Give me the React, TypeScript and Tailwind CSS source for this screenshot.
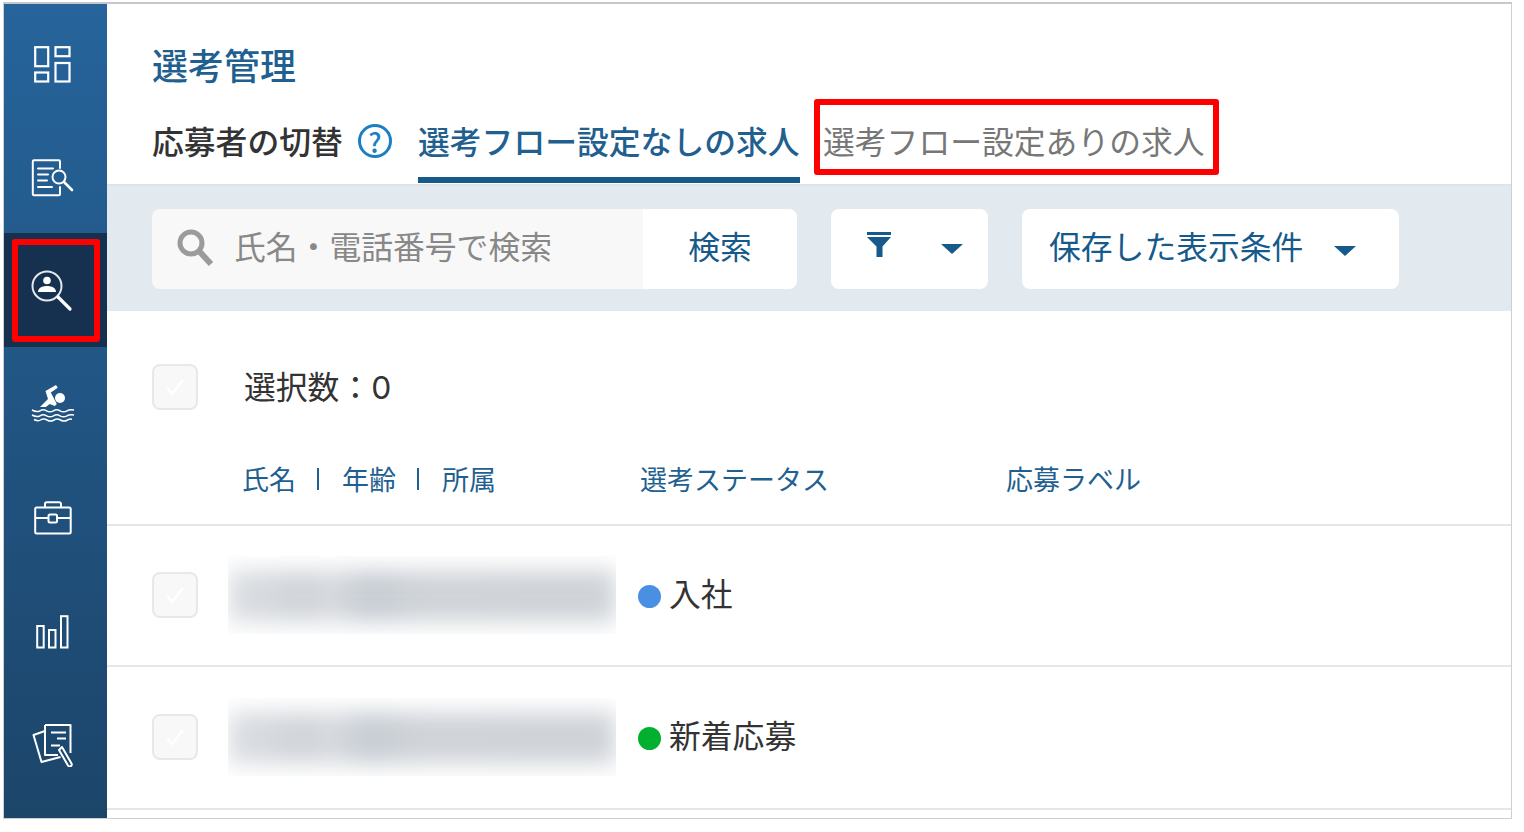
import React from "react";

const font = { fontFamily: '"Noto Sans CJK JP", "Noto Sans", sans-serif' };

const DashboardIcon = () => (
  <svg width="38" height="38" viewBox="0 0 38 38" fill="none" stroke="white" strokeWidth="2.2">
    <rect x="1.2" y="1.2" width="13" height="19" />
    <rect x="21.5" y="1.2" width="14" height="9" />
    <rect x="1.2" y="26.5" width="13" height="9" />
    <rect x="21.5" y="17" width="14" height="18.5" />
  </svg>
);

const ReportSearchIcon = () => (
  <svg width="44" height="38" viewBox="0 0 44 38" fill="none" stroke="white" strokeWidth="2" strokeLinecap="round">
    <path d="M29 9V2.5a1.2 1.2 0 0 0-1.2-1.2H3A1.2 1.2 0 0 0 1.800 2.500V35a1.200 1.200 0 0 0 1.200 1.200h24.800A1.200 1.200 0 0 0 29 35V28" />
    <path d="M7 9.500h15M7 15.500h10M7 21.500h9M7 28h14" />
    <circle cx="28" cy="18" r="6.500" />
    <path d="M33 23l8 8" strokeWidth="2.600" />
  </svg>
);

const PersonSearchIcon = () => (
  <svg width="42" height="42" viewBox="0 0 42 42" fill="none">
    <circle cx="16" cy="16" r="14.500" stroke="#e4e8ec" strokeWidth="2" />
    <circle cx="16" cy="10.500" r="3.800" fill="white" />
    <path d="M7 22c0-4 4-6 9-6s9 2 9 6z" fill="white" />
    <path d="M27 27l12 12" stroke="white" strokeWidth="3.200" strokeLinecap="round" />
  </svg>
);

const SwimIcon = () => (
  <svg width="44" height="38" viewBox="0 0 44 38" fill="none">
    <circle cx="29" cy="14" r="5" fill="white" />
    <path d="M9 23l8-8-2.500-8L25 1l1.800 2.800-7 4.700 6 11.500-2 2-5-2-4 3z" fill="white" />
    <path
      d="M1 26c3.500 2 6 2 8 .8s4.500-1.200 6.500 0 5 1.200 7 0 4.500-1.200 6.500 0 5 1.200 7 0 4-1.200 7-.8M1 31c3.500 2 6 2 8 .8s4.500-1.200 6.500 0 5 1.200 7 0 4.500-1.200 6.500 0 5 1.200 7 0 4-1.200 7-.8M3 35.500c3 1.500 5 1.500 6.500.5s4.500-1.200 6.500 0 5 1.200 7 0 4.500-1.200 6.500 0 5 1.200 7 0 2.500-1 4.500-.8"
      stroke="white"
      strokeWidth="1.500"
    />
  </svg>
);

const BriefcaseIcon = () => (
  <svg width="38" height="34" viewBox="0 0 38 34" fill="none" stroke="white" strokeWidth="2" strokeLinejoin="round">
    <rect x="1.200" y="6.500" width="35.500" height="26" rx="1.500" />
    <path d="M11 6.500V3a1.800 1.800 0 0 1 1.800-1.800h12.400A1.800 1.800 0 0 1 27 3v3.500" />
    <path d="M1.200 17h13M23.800 17h13" />
    <rect x="14.500" y="13.500" width="8.500" height="8" rx="1.500" />
  </svg>
);

const BarsIcon = () => (
  <svg width="34" height="34" viewBox="0 0 34 34" fill="none" stroke="white" strokeWidth="2">
    <rect x="1.200" y="11" width="6.500" height="21.500" />
    <rect x="13" y="15" width="6.500" height="17.500" />
    <rect x="25" y="1.200" width="6.500" height="31.300" />
  </svg>
);

const DocumentsIcon = () => (
  <svg width="42" height="44" viewBox="0 0 42 44" fill="none" stroke="white" strokeWidth="2" strokeLinejoin="round">
    <path d="M13 2h25.500v28" />
    <path d="M13 2v30h13" />
    <path d="M13 8L1.500 12l8 27 19-5" />
    <path d="M19 9.500h15M25 15.500h9M19 22.500h9" />
    <path d="M30 24l9.500 16.500a2 2 0 0 1-3.500 2L27 27z" />
  </svg>
);

const FilterIcon = () => (
  <svg width="24" height="26" viewBox="0 0 24 26" fill="#155a8a">
    <rect x="0" y="0" width="24" height="3" />
    <path d="M0 5h24l-8.500 9.500V25H9.500V14.500z" />
  </svg>
);

const Caret = () => <span className="block w-0 h-0 border-x-[11px] border-x-transparent border-t-[10px] border-t-[#155a8a]" />;

const navItems = [
  { Icon: DashboardIcon, offset: "pt-[6px]" },
  { Icon: ReportSearchIcon, offset: "pt-[4px]" },
  { Icon: PersonSearchIcon, offset: "" },
  { Icon: SwimIcon, offset: "pb-[2px]" },
  { Icon: BriefcaseIcon, offset: "" },
  { Icon: BarsIcon, offset: "" },
  { Icon: DocumentsIcon, offset: "pb-[3px]" },
];

const Sidebar = () => (
  <div className="w-[103px] shrink-0 pt-[1px] bg-gradient-to-b from-[#26649b] to-[#1c456a]">
    {navItems.map(({ Icon, offset }, i) =>
      i === 2 ? (
        <div key={i} className="h-[114px] bg-[#15314f] flex items-center justify-center">
          <div className="w-[88px] h-[103px] border-[6px] border-[#ff0000] rounded-[3px] flex items-center justify-center pr-[8px] pt-[2px]">
            <Icon />
          </div>
        </div>
      ) : (
        <div key={i} className={`h-[114px] flex items-center justify-center pr-[6px] ${offset}`}>
          <Icon />
        </div>
      )
    )}
  </div>
);

const Checkbox = () => (
  <div className="w-[46px] h-[46px] shrink-0 rounded-lg border-2 border-[#e8e8e8] bg-[#f8f8f8] flex items-center justify-center">
    <svg width="24" height="24" viewBox="0 0 24 24" fill="none" stroke="white" strokeWidth="2.500">
      <path d="M4 13l5 6L20 5" />
    </svg>
  </div>
);

const BlurredName = () => (
  <div className="w-[388px] h-[78px] overflow-hidden shrink-0 pt-[14px] pb-[12px]">
    <div className="h-[52px] blur-[11px] bg-[linear-gradient(90deg,#dcdfe3_0%,#d0d4d9_20%,#d8dbdf_27%,#c6ccd3_36%,#d0d4d9_50%,#cfd3d8_100%)]" />
  </div>
);

const Row = ({ dot, label, height }: { dot: string; label: string; height: string }) => (
  <div className={`${height} flex items-center pl-[45px] pb-[2px] border-b-2 border-[#e6e6e6]`}>
    <Checkbox />
    <div className="ml-[30px]">
      <BlurredName />
    </div>
    <span className={`ml-[22px] mt-[4px] w-[23px] h-[23px] rounded-full ${dot}`} />
    <span className="ml-[8px] pb-[5px] text-[31.8px] leading-[44px] text-[#333]">{label}</span>
  </div>
);

export default function App() {
  return (
    <div className="w-[1524px] h-[832px] bg-white pt-[2px] pl-[3px]" style={font}>
      <div className="w-[1509px] h-[817px] border border-[#cfcfcf] border-t-2 border-t-[#c8c8c8] flex overflow-hidden">
        <Sidebar />
        <div className="flex-1 min-w-0">
          {/* Title and tabs */}
          <div className="h-[180px] pl-[45px]">
            <div className="pt-[35px] text-[36px] leading-[50px] font-medium text-[#1f6090]">選考管理</div>
            <div className="mt-[10px] flex items-start">
              <div className="mt-[19px] text-[31.8px] leading-[44px] font-medium text-[#333] w-[190px] whitespace-nowrap">応募者の切替</div>
              <div className="mt-[25px] ml-[16px] w-[34px] h-[34px] rounded-full border-[3px] border-[#1b7fc4] text-[#1b7fc4] flex items-center justify-center text-[27px] leading-none font-medium">?</div>
              <div className="ml-[26px] w-[382px] h-[84px] pt-[19px] border-b-[6px] border-[#155a88] text-[31.8px] leading-[44px] font-medium text-[#1f6090] whitespace-nowrap">
                選考フロー設定なしの求人
              </div>
              <div className="ml-[14px] w-[405px] h-[76px] border-[6px] border-[#ff0000] rounded-[3px] pl-[3px] pt-[13px] text-[31.8px] leading-[44px] text-[#777] whitespace-nowrap">
                選考フロー設定ありの求人
              </div>
            </div>
          </div>

          {/* Search band */}
          <div className="h-[127px] bg-[#e2eaf0] border-t-2 border-[#e0e3e6] pl-[45px] pt-[23px] flex items-start">
            <div className="w-[645px] h-[80px] rounded-lg overflow-hidden flex">
              <div className="w-[491px] bg-[#f8f8f8] flex items-center pl-[25px]">
                <svg width="37" height="38" viewBox="0 0 37 38" fill="none" stroke="#9b9b9b" className="mb-[2px]">
                  <circle cx="14" cy="14" r="11" strokeWidth="5" />
                  <path d="M22 22l12 13" strokeWidth="6" />
                </svg>
                <span className="ml-[20px] pb-[8px] text-[31.8px] leading-[44px] text-[#888] whitespace-nowrap">氏名・電話番号で検索</span>
              </div>
              <div className="flex-1 bg-white flex items-center justify-center pb-[8px] text-[31.8px] leading-[44px] text-[#155a8a]">検索</div>
            </div>
            <div className="ml-[34px] w-[157px] h-[80px] rounded-lg bg-white flex items-center pl-[36px]">
              <span className="mb-[9px] flex">
                <FilterIcon />
              </span>
              <span className="ml-[50px]">
                <Caret />
              </span>
            </div>
            <div className="ml-[34px] w-[377px] h-[80px] rounded-lg bg-white flex items-center pl-[27px]">
              <span className="pb-[8px] text-[31.8px] leading-[44px] text-[#155a8a] whitespace-nowrap">保存した表示条件</span>
              <span className="ml-[31px] pt-[3px]">
                <Caret />
              </span>
            </div>
          </div>

          {/* Selection */}
          <div className="h-[215px] border-b-2 border-[#e6e6e6]">
            <div className="pt-[53px] pl-[45px] flex items-start">
              <Checkbox />
              <span className="ml-[46px] -mt-[1px] text-[31.8px] leading-[44px] text-[#333] whitespace-nowrap">
                選択数：<span className="font-['Inter']">0</span>
              </span>
            </div>
            <div className="mt-[50px] pl-[135px] flex items-center text-[27px] leading-[38px] text-[#1f6090] whitespace-nowrap">
              <span>氏名</span>
              <span className="ml-[21px] w-[2px] h-[22px] bg-[#1f6090]" />
              <span className="ml-[23px]">年齢</span>
              <span className="ml-[21px] w-[2px] h-[22px] bg-[#1f6090]" />
              <span className="ml-[23px]">所属</span>
              <span className="ml-[144px]">選考ステータス</span>
              <span className="ml-[177px]">応募ラベル</span>
            </div>
          </div>

          <Row dot="bg-[#4a90e2]" label="入社" height="h-[141px]" />
          <Row dot="bg-[#00b02e]" label="新着応募" height="h-[143px]" />
        </div>
      </div>
    </div>
  );
}
